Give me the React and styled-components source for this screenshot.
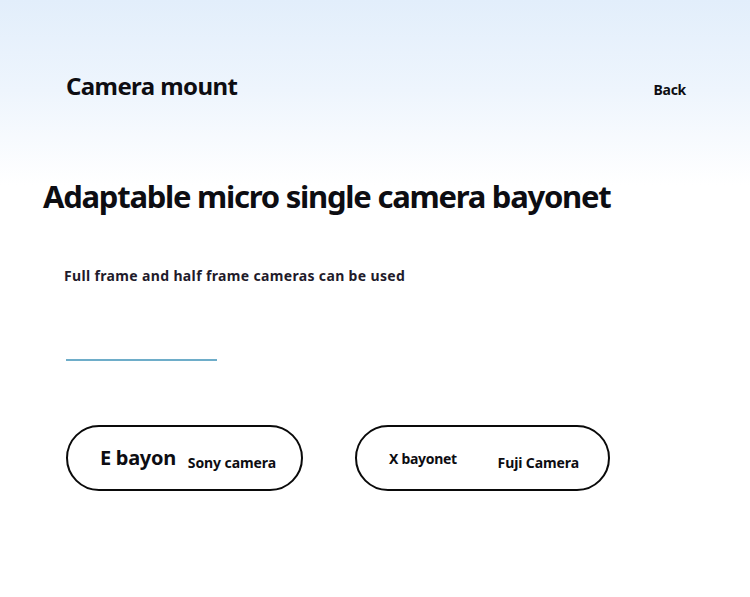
import React from 'react';
import styled, { createGlobalStyle } from 'styled-components';

const GlobalStyle = createGlobalStyle`
  html, body {
    margin: 0;
    padding: 0;
  }
  body {
    font-family: 'Noto Sans', 'Open Sans', sans-serif;
    color: #0d0d12;
  }
`;

const App = () => {
  return (
    <Page>
      <GlobalStyle />
      <Header>
        <HeaderTitle>Camera mount</HeaderTitle>
        <BackLink>Back</BackLink>
      </Header>
      <Headline>Adaptable micro single camera bayonet</Headline>
      <Subtitle>Full frame and half frame cameras can be used</Subtitle>
      <Divider />
      <MountRow>
        <MountPill $width={237}>
          <MountName $size={20} $shift={-1}>E bayon</MountName>
          <MountBrand $shift={4}>Sony camera</MountBrand>
        </MountPill>
        <MountPill $width={255} $split>
          <MountName $size={14} $shift={0}>X bayonet</MountName>
          <MountBrand $shift={4}>Fuji Camera</MountBrand>
        </MountPill>
      </MountRow>
    </Page>
  );
};

const Page = styled.div`
  width: 750px;
  height: 597px;
  overflow: hidden;
  background: linear-gradient(180deg, #e2eefb 0%, #eef5fd 90px, #ffffff 185px, #ffffff 100%);
`;

const Header = styled.header`
  display: flex;
  align-items: center;
  justify-content: space-between;
  padding: 68px 64px 0 66px;
  height: 34px;
`;

const HeaderTitle = styled.h2`
  margin: 0;
  font-size: 24px;
  font-weight: 700;
  letter-spacing: -0.6px;
`;

const BackLink = styled.span`
  font-size: 14px;
  font-weight: 700;
  margin-top: 9px;
  letter-spacing: -0.3px;
`;

const Headline = styled.h1`
  margin: 74px 0 0 43px;
  font-size: 31px;
  font-weight: 700;
  line-height: 40px;
  letter-spacing: -1.25px;
`;

const Subtitle = styled.p`
  margin: 50px 0 0 64px;
  font-size: 14px;
  font-weight: 700;
  line-height: 20px;
  color: #1f1b2b;
  letter-spacing: 0.35px;
`;

const Divider = styled.div`
  width: 151px;
  height: 2px;
  margin: 73px 0 0 66px;
  background: #6eadc9;
`;

const MountRow = styled.div`
  display: flex;
  gap: 52px;
  margin: 64px 0 0 66px;
`;

const MountPill = styled.div`
  box-sizing: border-box;
  width: ${(p) => p.$width}px;
  height: 66px;
  border: 2px solid #0a0a0a;
  border-radius: 33px;
  display: flex;
  align-items: center;
  justify-content: ${(p) => (p.$split ? 'space-between' : 'flex-start')};
  gap: 12px;
  padding: 0 ${(p) => (p.$split ? '29px' : '20px')} 0 32px;
`;

const MountName = styled.span`
  font-size: ${(p) => p.$size}px;
  font-weight: 700;
  letter-spacing: -0.3px;
  transform: translateY(${(p) => p.$shift}px);
`;

const MountBrand = styled.span`
  font-size: 14px;
  font-weight: 700;
  letter-spacing: -0.1px;
  transform: translateY(${(p) => p.$shift}px);
`;

export default App;
